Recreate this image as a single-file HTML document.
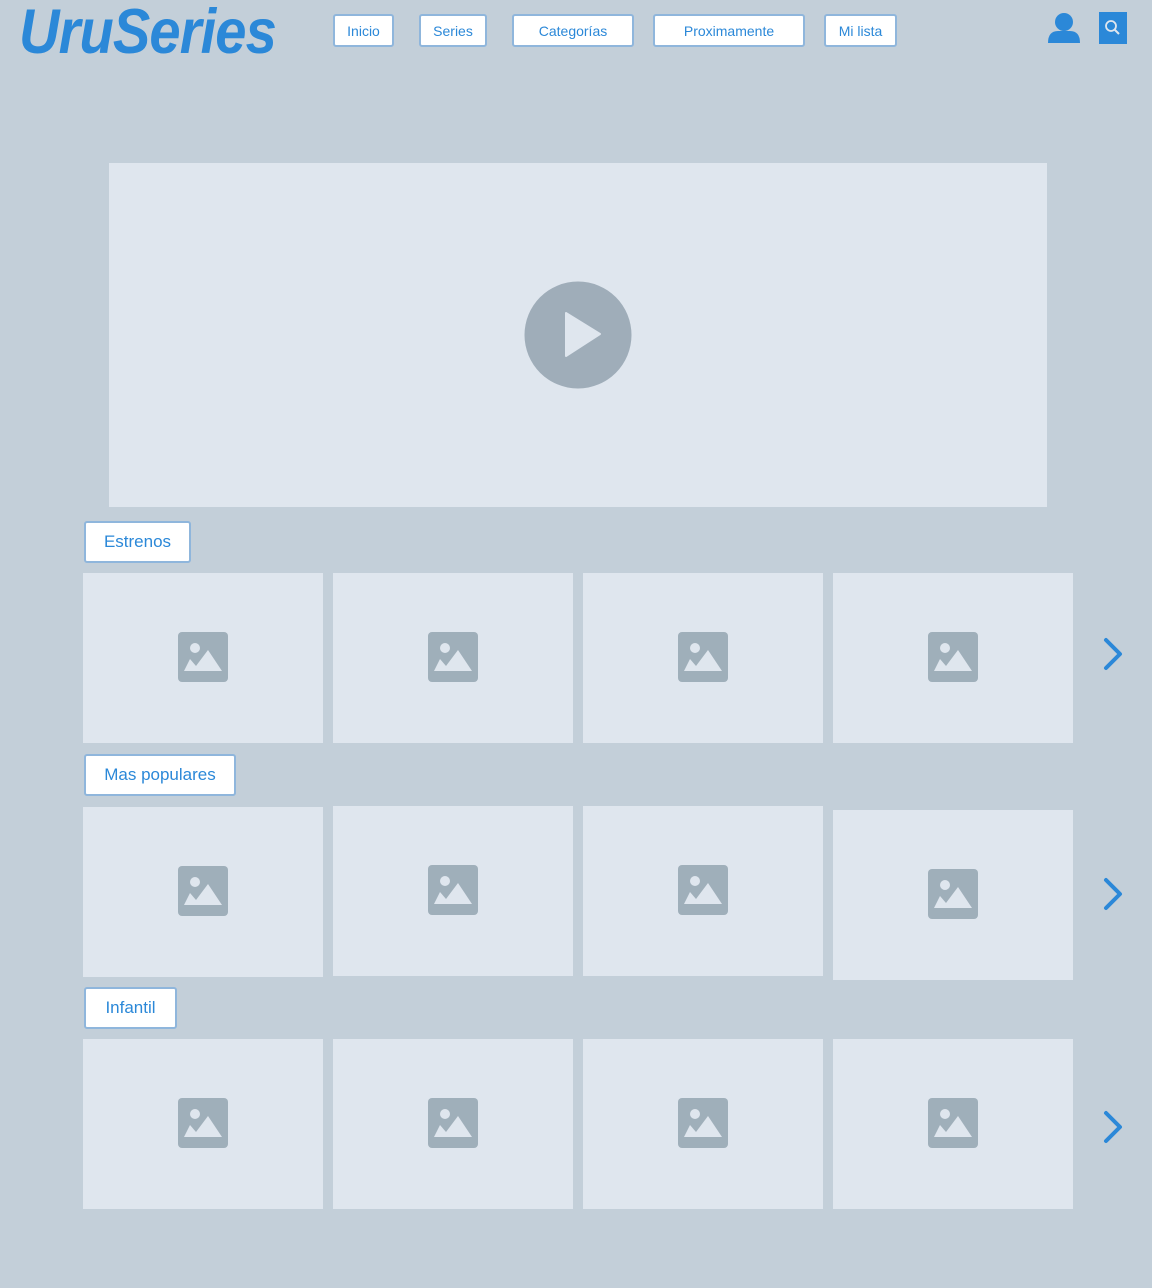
<!DOCTYPE html>
<html><head><meta charset="utf-8"><style>
*{margin:0;padding:0;box-sizing:border-box}
body{width:1152px;height:1288px;background:#c3cfd9;position:relative;overflow:hidden;font-family:"Liberation Sans",sans-serif;color:#2b88d8}
.abs{position:absolute}
.logo{left:19px;top:-4px;font-size:63px;font-weight:bold;font-style:italic;color:#2b88d8;transform:scaleX(0.89);transform-origin:left top;letter-spacing:-1px}
.btn{position:absolute;background:#fff;border:2px solid #8fb6dc;border-radius:3px;display:flex;align-items:center;justify-content:center;font-size:14px;color:#2b88d8}
.lbl{font-size:17px}
.card{position:absolute;width:240px;height:170px;background:#dfe6ee}
.card svg{position:absolute;left:95px;top:59px}
.chev{position:absolute;left:1100px}
</style></head><body>
<div class="abs logo">UruSeries</div>
<div class="btn" style="left:333px;top:14px;width:61px;height:33px">Inicio</div>
<div class="btn" style="left:419px;top:14px;width:68px;height:33px">Series</div>
<div class="btn" style="left:512px;top:14px;width:122px;height:33px">Categorías</div>
<div class="btn" style="left:653px;top:14px;width:152px;height:33px">Proximamente</div>
<div class="btn" style="left:824px;top:14px;width:73px;height:33px">Mi lista</div>
<svg class="abs" style="left:1046px;top:10px" width="36" height="36"><circle cx="18" cy="12" r="9" fill="#2b88d8"/><path d="M2 33 Q2 21 12 21 L24 21 Q34 21 34 33 Z" fill="#2b88d8"/></svg>
<svg class="abs" style="left:1099px;top:12px" width="28" height="32"><rect width="28" height="32" fill="#2b88d8"/><circle cx="12" cy="14" r="5" fill="none" stroke="#dfe6ee" stroke-width="1.8"/><path d="M16 18 L20 22" stroke="#dfe6ee" stroke-width="2"/></svg>

<div class="abs" style="left:109px;top:163px;width:938px;height:344px;background:#dfe6ee"></div>
<svg class="abs" style="left:524px;top:281px" width="108" height="108"><circle cx="54" cy="54" r="53.5" fill="#9fadb9"/><path d="M42 32 L76 53 L42 75 Z" fill="#dfe6ee" stroke="#dfe6ee" stroke-width="2" stroke-linejoin="round"/></svg>

<div class="btn lbl" style="left:84px;top:521px;width:107px;height:42px">Estrenos</div>
<div class="btn lbl" style="left:84px;top:754px;width:152px;height:42px">Mas populares</div>
<div class="btn lbl" style="left:84px;top:987px;width:93px;height:42px">Infantil</div>

<div id="cards"></div>
<script>
const ic='<svg width="50" height="50"><rect width="50" height="50" rx="4" fill="#9fafba"/><circle cx="17" cy="16" r="5" fill="#dfe6ee"/><path d="M6 39 L12 27 L18 34 L30 18 L44 39 Z" fill="#dfe6ee"/></svg>';
const rows=[[573,573,573,573],[807,806,806,810],[1039,1039,1039,1039]];
const xs=[83,333,583,833];let h='';
rows.forEach(r=>r.forEach((y,i)=>{h+=`<div class="card" style="left:${xs[i]}px;top:${y}px">${ic}</div>`}));
[654,894,1127].forEach(c=>{h+=`<svg class="chev" style="top:${c-18}px" width="26" height="36"><path d="M6 4 L20 18 L6 32" fill="none" stroke="#2b88d8" stroke-width="4" stroke-linecap="round" stroke-linejoin="round"/></svg>`});
document.getElementById('cards').innerHTML=h;
</script>
</body></html>
